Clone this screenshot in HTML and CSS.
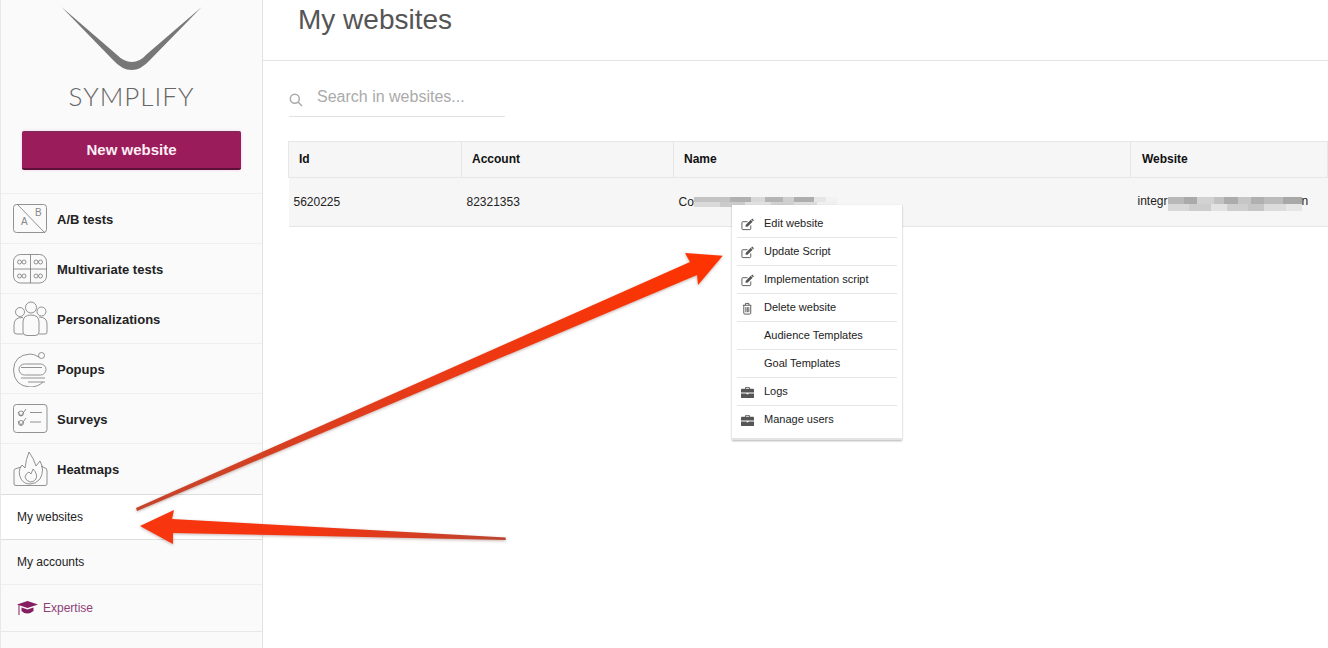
FILE: index.html
```html
<!DOCTYPE html>
<html lang="en">
<head>
    <meta charset="UTF-8">
    <title>My websites</title>
    <link rel="stylesheet" href="styles.css">
</head>
<body>
    <aside class="sidebar">
        <div class="brand">
            <svg class="brand-mark" width="142" height="64" viewBox="61 7 142 64">
                <path d="M61.5 7 L116 54 Q124 62 131.7 62 Q140 62 147 54 L201.7 7 L150 60 Q141 70 131.7 70 Q122 70 113 60 Z" fill="#777"/>
            </svg>
            <div class="brand-name">SYMPLIFY</div>
            <button class="new-button">New website</button>
        </div>

        <nav class="tools">
            <a class="tool">
                <svg class="tool-icon" viewBox="0 0 36 36">
                    <rect x="1.5" y="3.5" width="33" height="28" rx="3"/>
                    <path d="M5 3 L33 32"/>
                    <text x="9" y="24">A</text>
                    <text x="23" y="15">B</text>
                </svg>
                A/B tests
            </a>
            <a class="tool">
                <svg class="tool-icon" viewBox="0 0 36 36">
                    <rect x="1.5" y="3.5" width="33" height="28.5" rx="7"/>
                    <path d="M18.5 4 V32 M2 18 H35"/>
                    <circle cx="7.5" cy="11" r="2"/><circle cx="12" cy="11" r="2"/>
                    <circle cx="24" cy="11" r="2"/><circle cx="28.5" cy="11" r="2"/>
                    <circle cx="7.5" cy="25" r="2"/><circle cx="12" cy="25" r="2"/>
                    <circle cx="24" cy="25" r="2"/><circle cx="28.5" cy="25" r="2"/>
                </svg>
                Multivariate tests
            </a>
            <a class="tool">
                <svg class="tool-icon" viewBox="0 0 36 36">
                    <circle cx="19" cy="6.500" r="5.500"/>
                    <circle cx="8" cy="11" r="4.500"/>
                    <circle cx="29.500" cy="10.500" r="4.500"/>
                    <path d="M11 21 Q11 14 19 14 Q27 14 27 21 V31 Q27 34.500 23 34.500 H15 Q11 34.500 11 31 Z"/>
                    <path d="M11 16.500 Q2 16 2 24 V31 Q2 33 5 33 H11"/>
                    <path d="M27 16 Q35 16 35 23 V31 Q35 33 33 33 H27"/>
                </svg>
                Personalizations
            </a>
            <a class="tool">
                <svg class="tool-icon" viewBox="0 0 36 36">
                    <path d="M27 6 Q22 3 18 3 Q2 4 1.500 19 Q2 35 18 36 Q26 36 31 31"/>
                    <circle cx="29.500" cy="4.500" r="3"/>
                    <rect x="7" y="13" width="27" height="11" rx="5.500"/>
                    <path d="M9 16.500 H30 M9 27 H33 M16 31 H33"/>
                </svg>
                Popups
            </a>
            <a class="tool">
                <svg class="tool-icon" viewBox="0 0 36 36">
                    <rect x="1.500" y="3.500" width="33.500" height="28" rx="3"/>
                    <path d="M6 11 L9 15 L14 8 M6 20 L9 24 L14 17 M18 11.500 H30 M18 21 H29"/>
                    <circle cx="9" cy="12.500" r="2.500"/>
                    <circle cx="9" cy="22" r="2.500"/>
                </svg>
                Surveys
            </a>
            <a class="tool">
                <svg class="tool-icon" viewBox="0 0 36 36">
                    <path d="M9 16 L3 18 Q2 18 2 20 V33 Q2 34.500 4 34.500 H33 Q35 34.500 35 33 V20 Q35 17 33 17 L29 15"/>
                    <path d="M9 28 Q5 20 10 14 L13 17 Q14 8 17 1 Q22 8 24 15 L28 10 Q33 19 28 28 Q24 33 18 33 Q12 33 9 28 Z"/>
                    <path d="M13 26 Q14 22 17 21 L19 23 L21 18 Q26 23 24 28 Q22 31 18 31 Q14 30 13 26 Z"/>
                </svg>
                Heatmaps
            </a>
        </nav>

        <div class="side-links">
            <a class="side-link active">My websites</a>
            <a class="side-link">My accounts</a>
            <a class="side-link expertise">
                <svg width="21" height="14" viewBox="0 0 21 14">
                    <path d="M10.500 0 L21 3.500 L10.500 7 L0 3.500 Z"/>
                    <path d="M4.500 6.500 L10.500 8.500 L16.500 6.500 V10 Q13 12.500 10.500 12.500 Q7 12.500 4.500 10 Z"/>
                    <path d="M1.500 4 H2.500 V14 H1.500 Z"/>
                </svg>
                Expertise
            </a>
        </div>
    </aside>

    <main class="content">
        <header class="page-header">
            <h1>My websites</h1>
        </header>

        <div class="search">
            <svg width="14" height="14" viewBox="0 0 14 14" class="search-icon">
                <circle cx="5.800" cy="5.800" r="4.500"/>
                <path d="M9 9 L13 13"/>
            </svg>
            <span class="search-text">Search in websites...</span>
        </div>

        <table class="sites">
            <thead>
                <tr>
                    <th class="col-id">Id</th>
                    <th class="col-account">Account</th>
                    <th class="col-name">Name</th>
                    <th class="col-site">Website</th>
                </tr>
            </thead>
            <tbody>
                <tr>
                    <td>5620225</td>
                    <td>82321353</td>
                    <td>Co<span class="smudge smudge-name"></span></td>
                    <td class="col-site">integr<span class="smudge smudge-site"></span>n</td>
                </tr>
            </tbody>
        </table>
    </main>

    <ul class="menu">
        <li>
            <svg class="menu-icon" viewBox="0 0 14 14">
                <path class="line" d="M10.500 8 V11.500 Q10.500 12.500 9.500 12.500 H2 Q1 12.500 1 11.500 V5 Q1 4 2 4 H7"/>
                <path d="M5 7.500 L10.500 2 L12.500 4 L7 9.500 H5 Z M11 1.500 L12 0.500 L14 2.500 L13 3.500 Z"/>
            </svg>
            Edit website
        </li>
        <li>
            <svg class="menu-icon" viewBox="0 0 14 14">
                <path class="line" d="M10.500 8 V11.500 Q10.500 12.500 9.500 12.500 H2 Q1 12.500 1 11.500 V5 Q1 4 2 4 H7"/>
                <path d="M5 7.500 L10.500 2 L12.500 4 L7 9.500 H5 Z M11 1.500 L12 0.500 L14 2.500 L13 3.500 Z"/>
            </svg>
            Update Script
        </li>
        <li>
            <svg class="menu-icon" viewBox="0 0 14 14">
                <path class="line" d="M10.500 8 V11.500 Q10.500 12.500 9.500 12.500 H2 Q1 12.500 1 11.500 V5 Q1 4 2 4 H7"/>
                <path d="M5 7.500 L10.500 2 L12.500 4 L7 9.500 H5 Z M11 1.500 L12 0.500 L14 2.500 L13 3.500 Z"/>
            </svg>
            Implementation script
        </li>
        <li>
            <svg class="menu-icon" viewBox="0 0 14 14">
                <path class="line" d="M2 3.500 H11 M3 3.500 V12 Q3 13 4 13 H9.500 Q10.500 13 10.500 12 V3.500 M4.800 3.500 V1.500 H8.500 V3.500 M5.200 5.500 V11 M6.800 5.500 V11 M8.400 5.500 V11"/>
            </svg>
            Delete website
        </li>
        <li class="no-icon">Audience Templates</li>
        <li class="no-icon">Goal Templates</li>
        <li>
            <svg class="menu-icon" viewBox="0 0 14 14">
                <path d="M4.500 3 V1.800 Q4.500 1 5.300 1 H8.700 Q9.500 1 9.500 1.800 V3 H13 Q14 3 14 4 V7 H0 V4 Q0 3 1 3 Z M5.500 3 H8.500 V2 H5.500 Z M0 8 H6 V9 H8 V8 H14 V12 Q14 13 13 13 H1 Q0 13 0 12 Z"/>
            </svg>
            Logs
        </li>
        <li>
            <svg class="menu-icon" viewBox="0 0 14 14">
                <path d="M4.500 3 V1.800 Q4.500 1 5.300 1 H8.700 Q9.500 1 9.500 1.800 V3 H13 Q14 3 14 4 V7 H0 V4 Q0 3 1 3 Z M5.500 3 H8.500 V2 H5.500 Z M0 8 H6 V9 H8 V8 H14 V12 Q14 13 13 13 H1 Q0 13 0 12 Z"/>
            </svg>
            Manage users
        </li>
    </ul>

    <!-- Red arrows drawn over the screenshot -->
    <svg class="arrows" width="1328" height="648" viewBox="0 0 1328 648">
        <defs>
            <linearGradient id="arrowLong" x1="136" y1="509" x2="722" y2="255" gradientUnits="userSpaceOnUse">
                <stop offset="0" stop-color="#c4452c"/>
                <stop offset="0.5" stop-color="#e93a17"/>
                <stop offset="1" stop-color="#ff3300"/>
            </linearGradient>
            <linearGradient id="arrowShort" x1="140" y1="526" x2="506" y2="538" gradientUnits="userSpaceOnUse">
                <stop offset="0" stop-color="#f8360e"/>
                <stop offset="0.45" stop-color="#f53410"/>
                <stop offset="1" stop-color="#bb4530"/>
            </linearGradient>
        </defs>
        <polygon fill="url(#arrowLong)" points="136,508 690,262 685,253 722.700,255.700 698,285 697,275 137,511"/>
        <polygon fill="url(#arrowShort)" points="140,526 174,510 172,519 505.700,537.500 505.700,540 173,533 173,544"/>
    </svg>
</body>
</html>
```

FILE: styles.css
```css
* {
    box-sizing: border-box;
}
html, body {
    height: 100%;
}
body {
    margin: 0;
    display: flex;
    overflow: hidden;
    background-color: #fff;
    color: #222;
    font-family: "Liberation Sans", Arial, sans-serif;
}

/* Sidebar */
.sidebar {
    width: 263px;
    flex: none;
    background-color: #fafafa;
    border-left: 1px solid #e8e8e8;
    border-right: 1px solid #e2e2e2;
}
.brand {
    height: 193px;
    padding-top: 7px;
    display: flex;
    flex-direction: column;
    align-items: center;
}
.brand-mark {
    display: block;
    flex: none;
}
.brand-name {
    margin-top: 11px;
    font-family: Lato, sans-serif;
    font-weight: 300;
    font-size: 26px;
    line-height: 28px;
    letter-spacing: 1px;
    color: #666;
}
.new-button {
    width: 219px;
    height: 39px;
    margin-top: 21px;
    padding: 0 0 2px;
    background-color: #9b1c5a;
    border: none;
    border-top: 1px solid #7e2c58;
    border-bottom: 2px solid #5c0f38;
    border-radius: 2px;
    box-shadow: 0 0 3px rgba(220,120,200,0.35);
    color: #fdeef6;
    font-family: inherit;
    font-size: 15px;
    font-weight: bold;
}
.tool {
    height: 50px;
    display: flex;
    align-items: center;
    gap: 9px;
    padding-left: 11px;
    padding-top: 2px;
    border-top: 1px solid #efefef;
    font-size: 13px;
    font-weight: bold;
    color: #222;
}
.tool:last-child {
    height: 51px;
    padding-bottom: 1px;
}
.tool-icon {
    width: 36px;
    height: 36px;
    flex: none;
    margin-top: -2px;
    fill: none;
    stroke: #777;
    stroke-width: 0.800;
}
.tool-icon text {
    fill: #888;
    stroke: none;
    font-size: 10px;
    font-weight: normal;
    font-family: "Liberation Sans", sans-serif;
}
.side-links {
    border-top: 1px solid #dedede;
    font-size: 12px;
}
.side-link {
    display: flex;
    align-items: center;
    height: 45px;
    padding-left: 16px;
    border-bottom: 1px solid #efefef;
}
.side-link.active {
    background-color: #fff;
    border-bottom-color: #dedede;
}
.side-link.expertise {
    height: 47px;
    gap: 5px;
    color: #8e3f78;
    border-bottom-color: #e8e8e8;
}
.expertise svg {
    fill: #851f62;
}

/* Main column */
.content {
    flex: 1;
    min-width: 0;
}
.page-header {
    height: 61px;
    border-bottom: 1px solid #e4e4e4;
    padding-left: 35px;
}
.page-header h1 {
    margin: 0;
    font-size: 28px;
    font-weight: normal;
    line-height: 40px;
    color: #555;
}
.search {
    width: 216px;
    height: 56px;
    margin-left: 26px;
    padding-top: 26px;
    display: flex;
    align-items: flex-start;
    border-bottom: 1px solid #e2e2e2;
}
.search-icon {
    flex: none;
    margin-top: 6px;
    fill: none;
    stroke: #aaa;
    stroke-width: 1.500;
}
.search-text {
    margin-left: 14px;
    font-size: 16px;
    line-height: 20px;
    color: #aaa;
}
.sites {
    width: 1040px;
    margin: 24px 0 0 25px;
    border-collapse: collapse;
    table-layout: fixed;
    font-size: 12px;
}
.col-id { width: 173px; }
.col-account { width: 212px; }
.col-name { width: 457px; }
.sites th {
    height: 36px;
    padding: 0 10px 2px;
    text-align: left;
    background-color: #f6f6f6;
    border: 1px solid #e6e6e6;
    color: #111;
}
.sites td {
    height: 49px;
    padding: 0 5px;
    background-color: #f6f6f6;
    border-bottom: 1px solid #e6e6e6;
    white-space: nowrap;
}
.sites th.col-site {
    padding-left: 11px;
}
.sites td.col-site {
    padding-left: 7px;
}
.smudge {
    display: inline-block;
}
.smudge-name {
    width: 143px;
    height: 10px;
    vertical-align: -1px;
    background:
        linear-gradient(90deg, #c4c4c4 0 25%, #b0b0b0 25% 40%, #d8d8d8 40% 50%, #b4b4b4 50% 62%, #cfcfcf 62% 70%, #aeaeae 70% 84%, #e6e6e6 84% 92%, #f2f2f2 92%) top / 100% 50% no-repeat,
        linear-gradient(90deg, #dadada 0 18%, #cbcbcb 18% 36%, #e0e0e0 36% 54%, #d0d0d0 54% 70%, #dcdcdc 70% 86%, #f0f0f0 86%) bottom / 100% 50% no-repeat;
}
.smudge-site {
    width: 134px;
    height: 14px;
    vertical-align: -6px;
    background:
        linear-gradient(90deg, #b8b8b8 0 12%, #aaa 12% 22%, #d2d2d2 22% 34%, #c2c2c2 34% 42%, #acacac 42% 52%, #c6c6c6 52% 62%, #b0b0b0 62% 72%, #bcbcbc 72% 86%, #a8a8a8 86%) top / 100% 50% no-repeat,
        linear-gradient(90deg, #d8d8d8 0 16%, #cdcdcd 16% 32%, #e2e2e2 32% 44%, #cfcfcf 44% 60%, #c6c6c6 60% 72%, #dcdcdc 72% 88%, #e6e6e6 88%) bottom / 100% 50% no-repeat;
}

/* Context menu, sits on top of the table */
.menu {
    position: absolute;
    left: 732px;
    top: 205px;
    width: 170px;
    height: 235px;
    margin: 0;
    padding: 5px 5px 0;
    list-style: none;
    background-color: #fff;
    box-shadow: 0 1px 2px rgba(0,0,0,0.3);
    border-bottom: 2px solid #e4e4e4;
    font-size: 11px;
    color: #222;
}
.menu li {
    height: 28px;
    display: flex;
    align-items: center;
    gap: 10px;
    padding-left: 4px;
    padding-bottom: 1px;
    border-bottom: 1px solid #e6e6e6;
}
.menu li:last-child {
    border-bottom-color: transparent;
}
.menu .no-icon {
    padding-left: 27px;
}
.menu-icon {
    width: 13px;
    height: 13px;
    flex: none;
    margin-top: 3px;
    fill: #555;
}
.menu-icon .line {
    fill: none;
    stroke: #555;
    stroke-width: 1;
}

/* Arrow overlay */
.arrows {
    position: absolute;
    left: 0;
    top: 0;
    pointer-events: none;
    filter: drop-shadow(0 1px 1.500px rgba(90,30,20,0.35));
}
```
